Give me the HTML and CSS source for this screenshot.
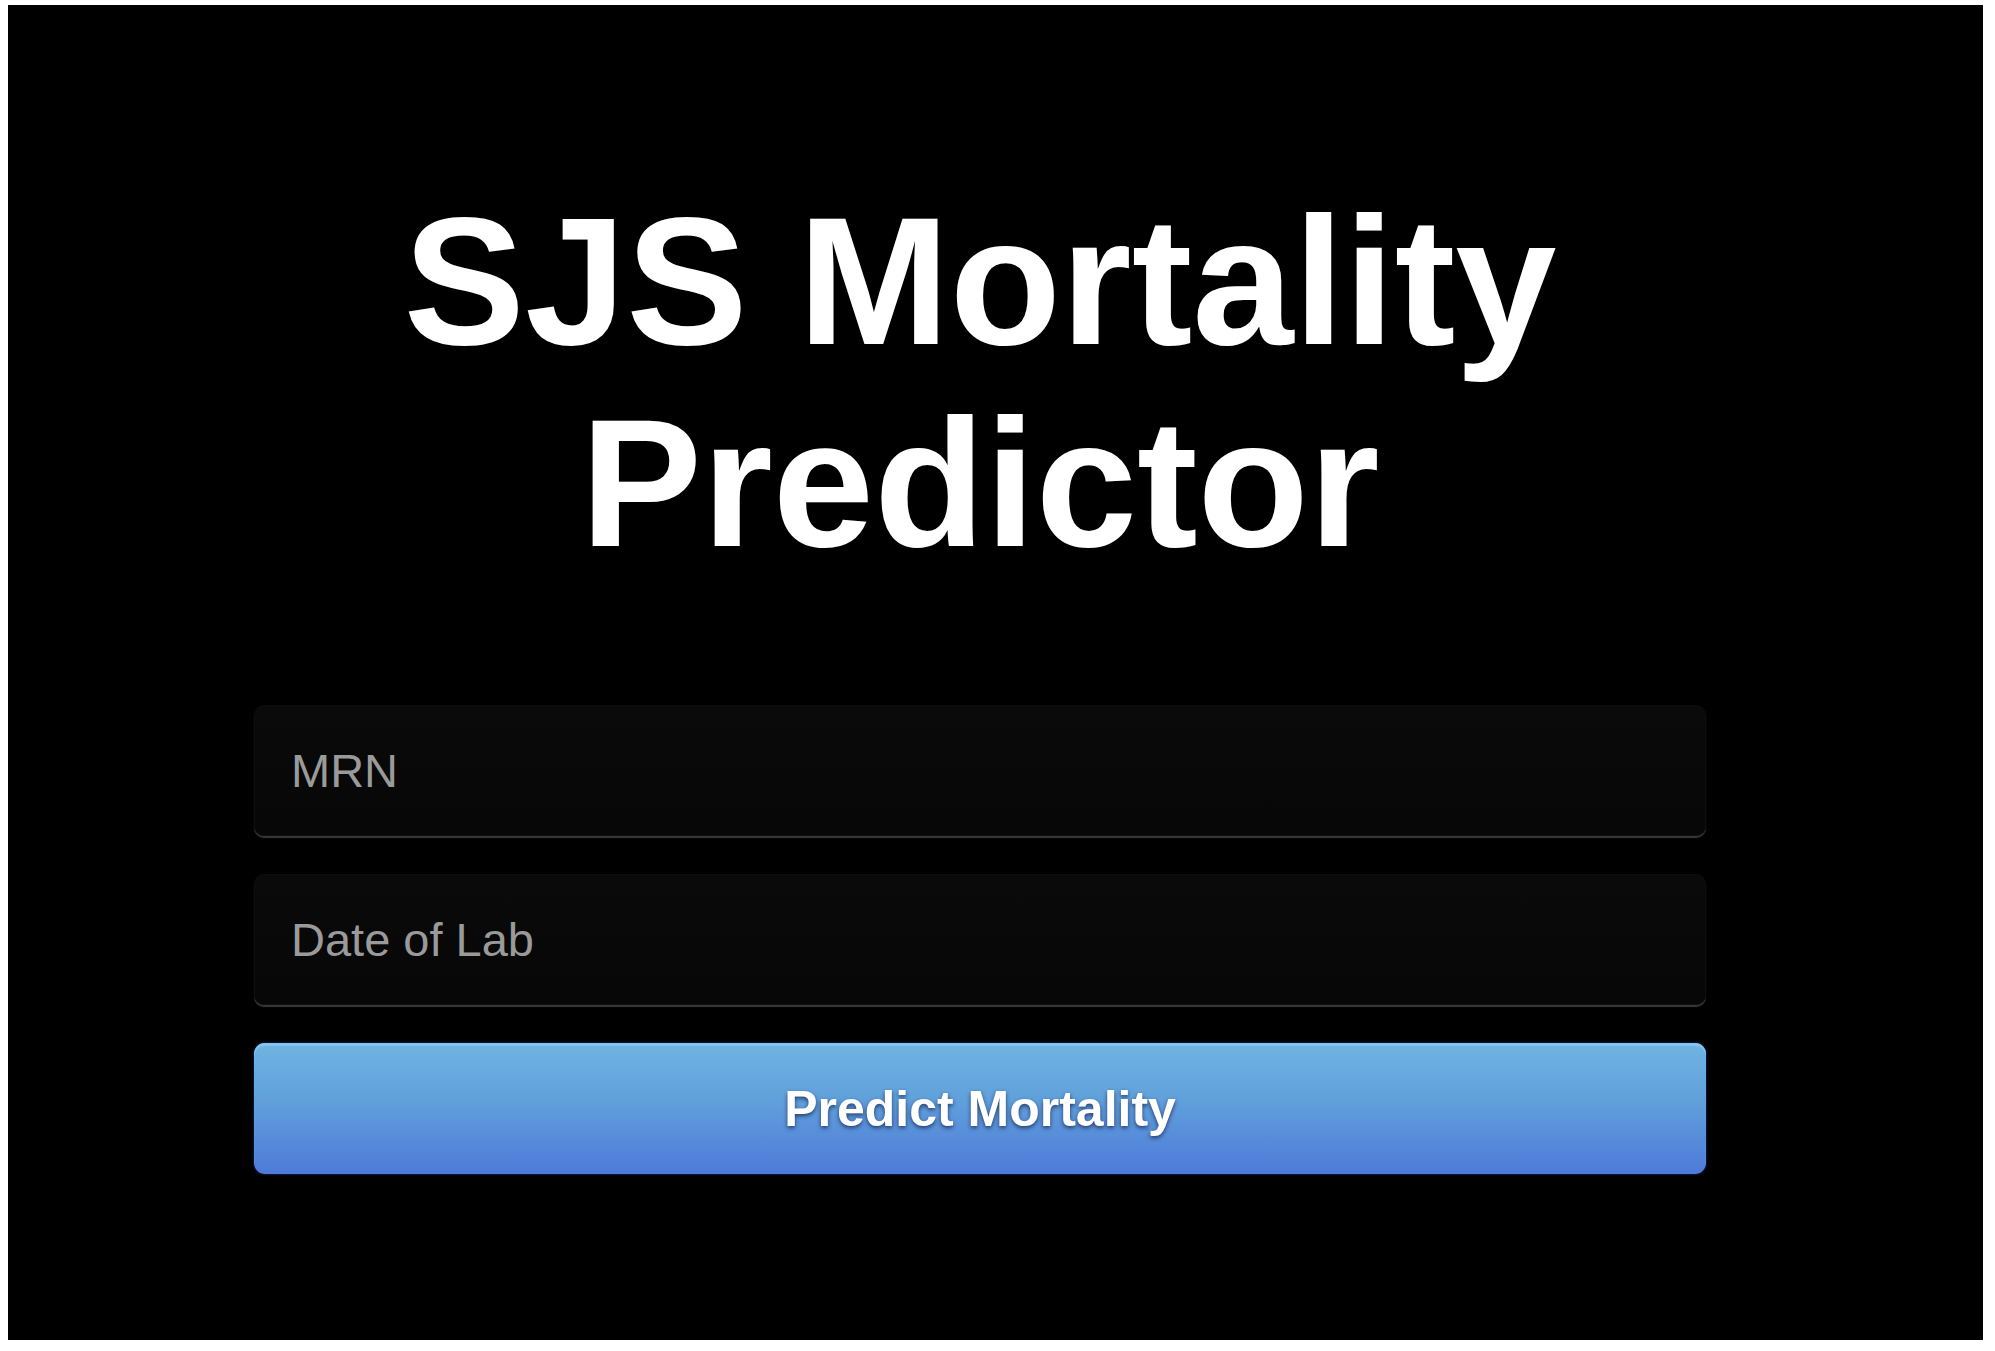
FILE: index.html
```html
<!DOCTYPE html>
<html lang="en">
<head>
<meta charset="utf-8">
<title>SJS Mortality Predictor</title>
<link rel="stylesheet" href="styles.css">
</head>
<body>
<main class="panel">
  <div class="content">
    <h1 class="title">SJS Mortality<br>Predictor</h1>
    <form class="form">
      <input class="field" type="text" placeholder="MRN">
      <input class="field" type="text" placeholder="Date of Lab">
      <button class="predict" type="button">Predict Mortality</button>
    </form>
  </div>
</main>
</body>
</html>
```
FILE: styles.css
```css
html, body {
  margin: 0;
  background: #ffffff;
}
body {
  padding: 5px 12px 11px 8px;
  font-family: "Liberation Sans", Arial, Helvetica, sans-serif;
}
.panel {
  display: block;
  background: #000000;
  height: 1335px;
  box-sizing: border-box;
  padding: 175px 0 0 246px;
}
.content {
  width: 1452px;
}
.title {
  margin: 0;
  color: #ffffff;
  font-weight: 700;
  font-size: 182px;
  line-height: 202px;
  text-align: center;
  letter-spacing: 0;
}
.form {
  margin-top: 121px;
  display: flex;
  flex-direction: column;
  gap: 38px;
}
.field {
  display: block;
  width: 100%;
  height: 131px;
  box-sizing: border-box;
  margin: 0;
  padding: 0 36px;
  background: linear-gradient(#0a0a0a, #070707);
  border: 1px solid #0e0e0e;
  border-radius: 10px;
  box-shadow: 0 2px 1px rgba(255, 255, 255, 0.22);
  color: #cccccc;
  font-family: "Liberation Sans", Arial, Helvetica, sans-serif;
  font-size: 47px;
  outline: none;
}
.field::placeholder {
  color: #9a9a9a;
}
.predict {
  display: block;
  width: 100%;
  height: 131px;
  margin: 0;
  padding: 0;
  border: none;
  border-radius: 11px;
  background: linear-gradient(#6fb4e2 0%, #62a2dc 40%, #4e7ad8 100%);
  box-shadow: inset 0 3px 1px #86c4f0, 0 0 3px rgba(60, 90, 200, 0.6);
  color: #ffffff;
  font-family: "Liberation Sans", Arial, Helvetica, sans-serif;
  font-size: 50px;
  font-weight: 700;
  text-shadow: 0 2px 4px rgba(10, 20, 60, 0.7);
  cursor: pointer;
}
```
